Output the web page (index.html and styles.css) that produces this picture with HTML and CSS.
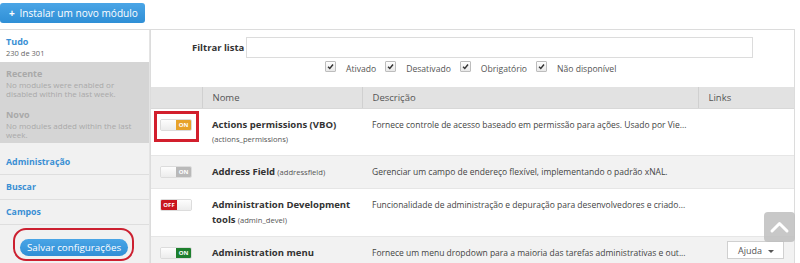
FILE: index.html
```html
<!DOCTYPE html>
<html lang="pt">
<head>
<meta charset="utf-8">
<title>Módulos</title>
<link rel="stylesheet" href="styles.css">
</head>
<body>
<div class="top">
  <a class="btn-install" href="#"><span class="plus">+</span> Instalar um novo módulo</a>
</div>
<div class="layout">
  <aside class="sidebar">
    <div class="side-all">
      <div class="side-title">Tudo</div>
      <div class="side-count">230 de 301</div>
    </div>
    <div class="side-dis">
      <div class="side-dis-title">Recente</div>
      <div class="side-dis-text">No modules were enabled or disabled within the last week.</div>
    </div>
    <div class="side-dis side-dis-2">
      <div class="side-dis-title">Novo</div>
      <div class="side-dis-text">No modules added within the last week.</div>
    </div>
    <div class="side-links">
      <div class="side-link">Administração</div>
      <div class="side-link">Buscar</div>
      <div class="side-link">Campos</div>
    </div>
    <div class="side-save">
      <span class="save-ring"><span class="btn-save">Salvar configurações</span></span>
    </div>
  </aside>
  <main class="main">
    <div class="filter">
      <div class="filter-row">
        <label class="filter-label">Filtrar lista</label>
        <div class="filter-input"></div>
      </div>
      <div class="checks">
        <span class="cb"><svg viewBox="0 0 10 10"><path d="M2.3 5.2 L4.2 7.1 L7.8 2.8" /></svg></span><span class="cb-label">Ativado</span>
        <span class="cb"><svg viewBox="0 0 10 10"><path d="M2.3 5.2 L4.2 7.1 L7.8 2.8" /></svg></span><span class="cb-label">Desativado</span>
        <span class="cb"><svg viewBox="0 0 10 10"><path d="M2.3 5.2 L4.2 7.1 L7.8 2.8" /></svg></span><span class="cb-label">Obrigatório</span>
        <span class="cb"><svg viewBox="0 0 10 10"><path d="M2.3 5.2 L4.2 7.1 L7.8 2.8" /></svg></span><span class="cb-label">Não disponível</span>
      </div>
    </div>
    <table class="modules">
      <colgroup>
        <col class="c-toggle"><col class="c-name"><col class="c-desc"><col class="c-links">
      </colgroup>
      <thead>
        <tr><th></th><th>Nome</th><th>Descrição</th><th>Links</th></tr>
      </thead>
      <tbody>
        <tr class="r1">
          <td class="t-cell"><span class="tog"><span class="tog-blank"></span><span class="tog-on orange">ON</span></span><span class="hl-box"></span></td>
          <td class="n-cell"><b>Actions permissions (VBO)</b><div class="mach">(actions_permissions)</div></td>
          <td class="d-cell">Fornece controle de acesso baseado em permissão para ações. Usado por Vie...</td>
          <td></td>
        </tr>
        <tr class="alt">
          <td class="t-cell"><span class="tog"><span class="tog-blank"></span><span class="tog-on grey">ON</span></span></td>
          <td class="n-cell"><b>Address Field</b> <span class="mach-in">(addressfield)</span></td>
          <td class="d-cell">Gerenciar um campo de endereço flexível, implementando o padrão xNAL.</td>
          <td></td>
        </tr>
        <tr>
          <td class="t-cell"><span class="tog"><span class="tog-off">OFF</span><span class="tog-blank"></span></span></td>
          <td class="n-cell"><b>Administration Development</b><br><b>tools</b> <span class="mach-in">(admin_devel)</span></td>
          <td class="d-cell">Funcionalidade de administração e depuração para desenvolvedores e criado...</td>
          <td></td>
        </tr>
        <tr class="alt">
          <td class="t-cell"><span class="tog"><span class="tog-blank"></span><span class="tog-on green">ON</span></span></td>
          <td class="n-cell"><b>Administration menu</b></td>
          <td class="d-cell">Fornece um menu dropdown para a maioria das tarefas administrativas e out...</td>
          <td class="l-cell"><span class="help">Ajuda <span class="caret"></span></span></td>
        </tr>
      </tbody>
    </table>
  </main>
</div>
<a class="to-top" href="#"><svg viewBox="0 0 31 30"><path d="M8 19 L15.5 11.5 L23 19" /></svg></a>
</body>
</html>
```

FILE: styles.css
```css
html, body {
  margin: 0;
  padding: 0;
  background: #fff;
  overflow: hidden;
}
body {
  font-family: "Open Sans", "DejaVu Sans", sans-serif;
  color: #333;
  width: 800px;
  height: 263px;
}
.top {
  height: 29px;
}
.btn-install {
  display: inline-block;
  margin-top: 1px;
  height: 20px;
  line-height: 20px;
  padding: 0 7px 0 9px;
  border-radius: 3px;
  background: linear-gradient(#4aa5e6, #2f8fd6);
  color: #fff;
  font-size: 10.1px;
  text-decoration: none;
}
.btn-install .plus {
  font-weight: bold;
  margin-right: 2px;
}
.layout {
  display: flex;
  border-top: 1px solid #dcdcdc;
  height: 240px;
  margin-right: 5px;
}
.sidebar {
  width: 149px;
  flex: 0 0 149px;
  background: #f1f1f1;
  border-right: 1px solid #e4e4e4;
  display: flex;
  flex-direction: column;
}
.side-all {
  background: #fff;
  height: 32px;
  padding: 6px 0 0 6px;
  box-sizing: border-box;
}
.side-title {
  color: #3a8fd4;
  font-weight: bold;
  font-size: 9px;
  line-height: 12px;
}
.side-count {
  color: #666;
  font-size: 7.5px;
  line-height: 10px;
}
.side-dis {
  background: #d5d5d5;
  height: 41px;
  padding: 6px 6px 0 6px;
  box-sizing: border-box;
  color: #a9a9a9;
}
.side-dis-2 {
  height: 40px;
}
.side-dis-title {
  font-weight: bold;
  font-size: 9px;
  line-height: 12px;
}
.side-dis-text {
  font-size: 8px;
  line-height: 9px;
  padding-right: 8px;
}
.side-links {
  padding-top: 7px;
}
.side-link {
  color: #3a8fd4;
  font-weight: bold;
  font-size: 8.8px;
  padding: 0 6px;
  height: 24px;
  line-height: 24px;
  border-bottom: 1px solid #dedede;
}
.side-save {
  padding: 3px 0 0 13px;
}
.save-ring {
  display: inline-block;
  border: 2px solid #cc2030;
  border-radius: 13px;
  padding: 4px 4px 3px 5px;
}
.btn-save {
  display: inline-block;
  background: linear-gradient(#4aa5e6, #2f8fd6);
  color: #fff;
  font-size: 9.8px;
  height: 17px;
  line-height: 17px;
  padding: 0 7px;
  border-radius: 9px;
}
.main {
  flex: 1;
  border-left: 1px solid #dcdcdc;
  border-right: 1px solid #dcdcdc;
}
.filter {
  height: 57px;
  padding-top: 7px;
  box-sizing: border-box;
}
.filter-row {
  display: flex;
  align-items: center;
  padding-left: 41px;
}
.filter-label {
  font-weight: bold;
  font-size: 9.5px;
  color: #333;
  width: 54px;
}
.filter-input {
  width: 505px;
  height: 19px;
  border: 1px solid #dcdcdc;
}
.checks {
  display: flex;
  align-items: center;
  padding-left: 174px;
  margin-top: 5px;
  font-size: 8.6px;
  color: #555;
}
.cb {
  display: inline-block;
  width: 9px;
  height: 9px;
  border: 1px solid #bdbdbd;
  border-radius: 1px;
  background: linear-gradient(#fff, #e8e8e8);
  margin-top: -6px;
}
.cb svg {
  display: block;
  width: 9px;
  height: 9px;
}
.cb svg path {
  fill: none;
  stroke: #333;
  stroke-width: 1.6;
}
.cb-label {
  margin: 0 9px 0 10px;
}
.modules {
  width: 100%;
  border-collapse: collapse;
  table-layout: fixed;
  font-size: 8.5px;
}
.c-toggle { width: 51px; }
.c-name { width: 160px; }
.c-desc { width: 336px; }
.modules th {
  background: #e2e2e2;
  color: #555;
  font-weight: normal;
  font-size: 9.5px;
  text-align: left;
  height: 21px;
  padding: 0 10px;
  border-left: 1px solid #d0d0d0;
  border-bottom: 1px solid #d8d8d8;
}
.modules th:first-child {
  border-left: none;
}
.modules td {
  vertical-align: top;
  padding: 8px 10px;
  line-height: 15px;
  border-bottom: 1px solid #e6e6e6;
  white-space: nowrap;
  overflow: hidden;
}
.modules td.n-cell {
  white-space: normal;
  color: #333;
}
.modules td.n-cell b {
  font-size: 9.5px;
}
.modules tr.alt td {
  background: #f2f2f2;
}
.mach, .mach-in {
  font-size: 7.6px;
  color: #555;
}
.d-cell {
  color: #444;
}
.modules td.t-cell {
  padding: 10px 0 0 9px;
  position: relative;
  overflow: visible;
}
.tog {
  display: inline-flex;
  width: 30px;
  height: 10px;
  border: 1px solid #dcdcdc;
  border-radius: 2px;
  background: #f6f6f6;
  overflow: hidden;
  vertical-align: top;
}
.tog-blank {
  flex: 1;
  background: linear-gradient(#fdfdfd, #ececec);
}
.tog-on, .tog-off {
  width: 15px;
  color: #fff;
  font-size: 6px;
  font-weight: bold;
  line-height: 10px;
  text-align: center;
}
.orange { background: #e7a22a; }
.grey { background: #b9b9b9; }
.green { background: #1d7f2d; }
.tog-off {
  background: #c9161f;
  width: 16px;
}
.hl-box {
  position: absolute;
  left: 3px;
  top: 2px;
  width: 45px;
  height: 31px;
  border: 3px solid #d21f2d;
  box-sizing: border-box;
}
.modules td.l-cell {
  padding: 4px 10px 0 29px;
  overflow: visible;
}
.help {
  display: inline-block;
  width: 57px;
  height: 18px;
  line-height: 18px;
  border: 1px solid #d0d0d0;
  background: #fff;
  color: #555;
  font-size: 9px;
  padding-left: 10px;
  box-sizing: border-box;
  position: relative;
}
.caret {
  position: absolute;
  right: 9px;
  top: 8px;
  border-left: 3px solid transparent;
  border-right: 3px solid transparent;
  border-top: 3px solid #555;
}
.to-top {
  position: absolute;
  left: 764px;
  top: 212px;
  width: 31px;
  height: 30px;
  border-radius: 4px;
  background: rgba(190, 190, 190, 0.85);
}
.to-top svg {
  display: block;
  width: 31px;
  height: 30px;
}
.to-top svg path {
  fill: none;
  stroke: #fff;
  stroke-width: 3;
  stroke-linecap: round;
  stroke-linejoin: round;
}
```
